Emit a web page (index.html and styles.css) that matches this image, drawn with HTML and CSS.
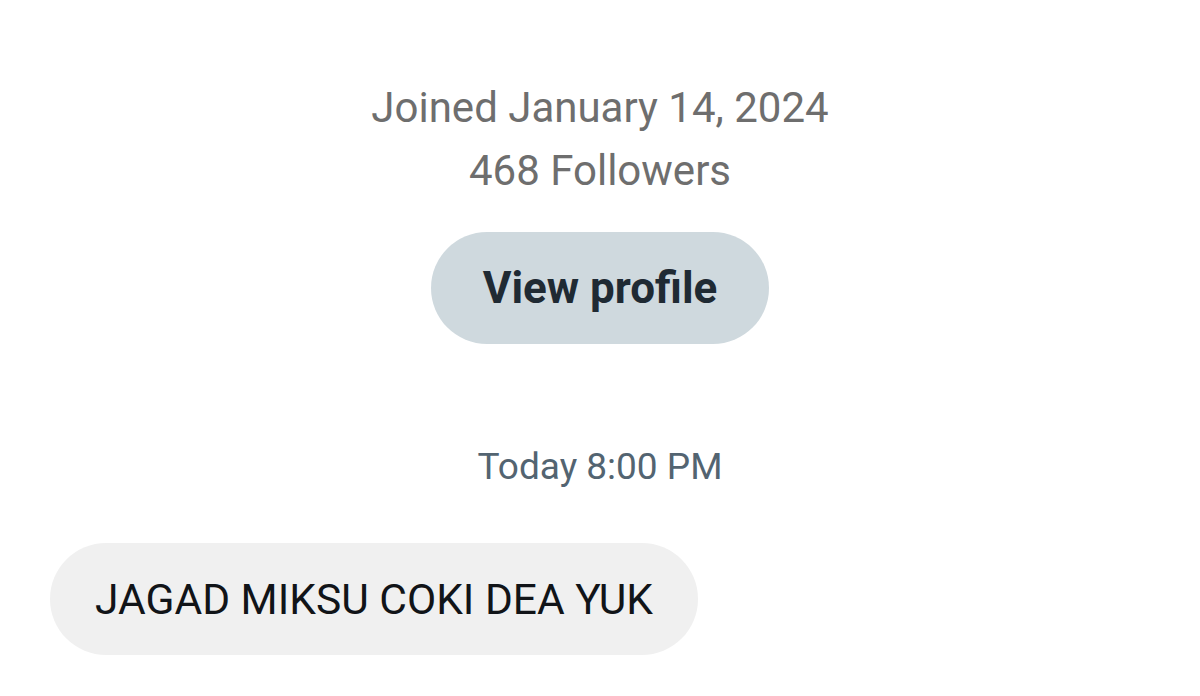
FILE: index.html
```html
<!DOCTYPE html>
<html lang="en">
<head>
<meta charset="utf-8">
<link rel="stylesheet" href="styles.css">
</head>
<body>
<main class="chat">
  <section class="profile">
    <div class="meta">Joined January 14, 2024</div>
    <div class="meta">468 Followers</div>
    <button class="view-btn">View profile</button>
  </section>
  <div class="time">Today 8:00 PM</div>
  <div class="row">
    <div class="bubble">JAGAD MIKSU COKI DEA YUK</div>
  </div>
</main>
</body>
</html>
```

FILE: styles.css
```css
html, body {
  margin: 0;
  padding: 0;
  background: #ffffff;
}
body {
  font-family: Roboto, "Liberation Sans", sans-serif;
  width: 1200px;
  height: 696px;
  overflow: hidden;
}
.chat {
  display: flex;
  flex-direction: column;
  padding: 76px 50px 0;
}
.profile {
  display: flex;
  flex-direction: column;
  align-items: center;
}
.meta {
  font-size: 42px;
  line-height: 63px;
  color: #6e6e6e;
}
.view-btn {
  margin-top: 30px;
  width: 338px;
  height: 112px;
  border: 0;
  border-radius: 56px;
  background: #cfd9de;
  color: #1f2a33;
  font-family: Roboto, "Liberation Sans", sans-serif;
  font-weight: 700;
  font-size: 44px;
  padding: 0;
}
.time {
  margin-top: 100px;
  text-align: center;
  font-size: 37px;
  line-height: 46px;
  color: #536471;
}
.row {
  display: flex;
  margin-top: 53px;
}
.bubble {
  display: flex;
  align-items: center;
  height: 112px;
  padding: 0 45px;
  border-radius: 56px;
  background: #f0f0f0;
  color: #111418;
  font-size: 42.5px;
}
```
